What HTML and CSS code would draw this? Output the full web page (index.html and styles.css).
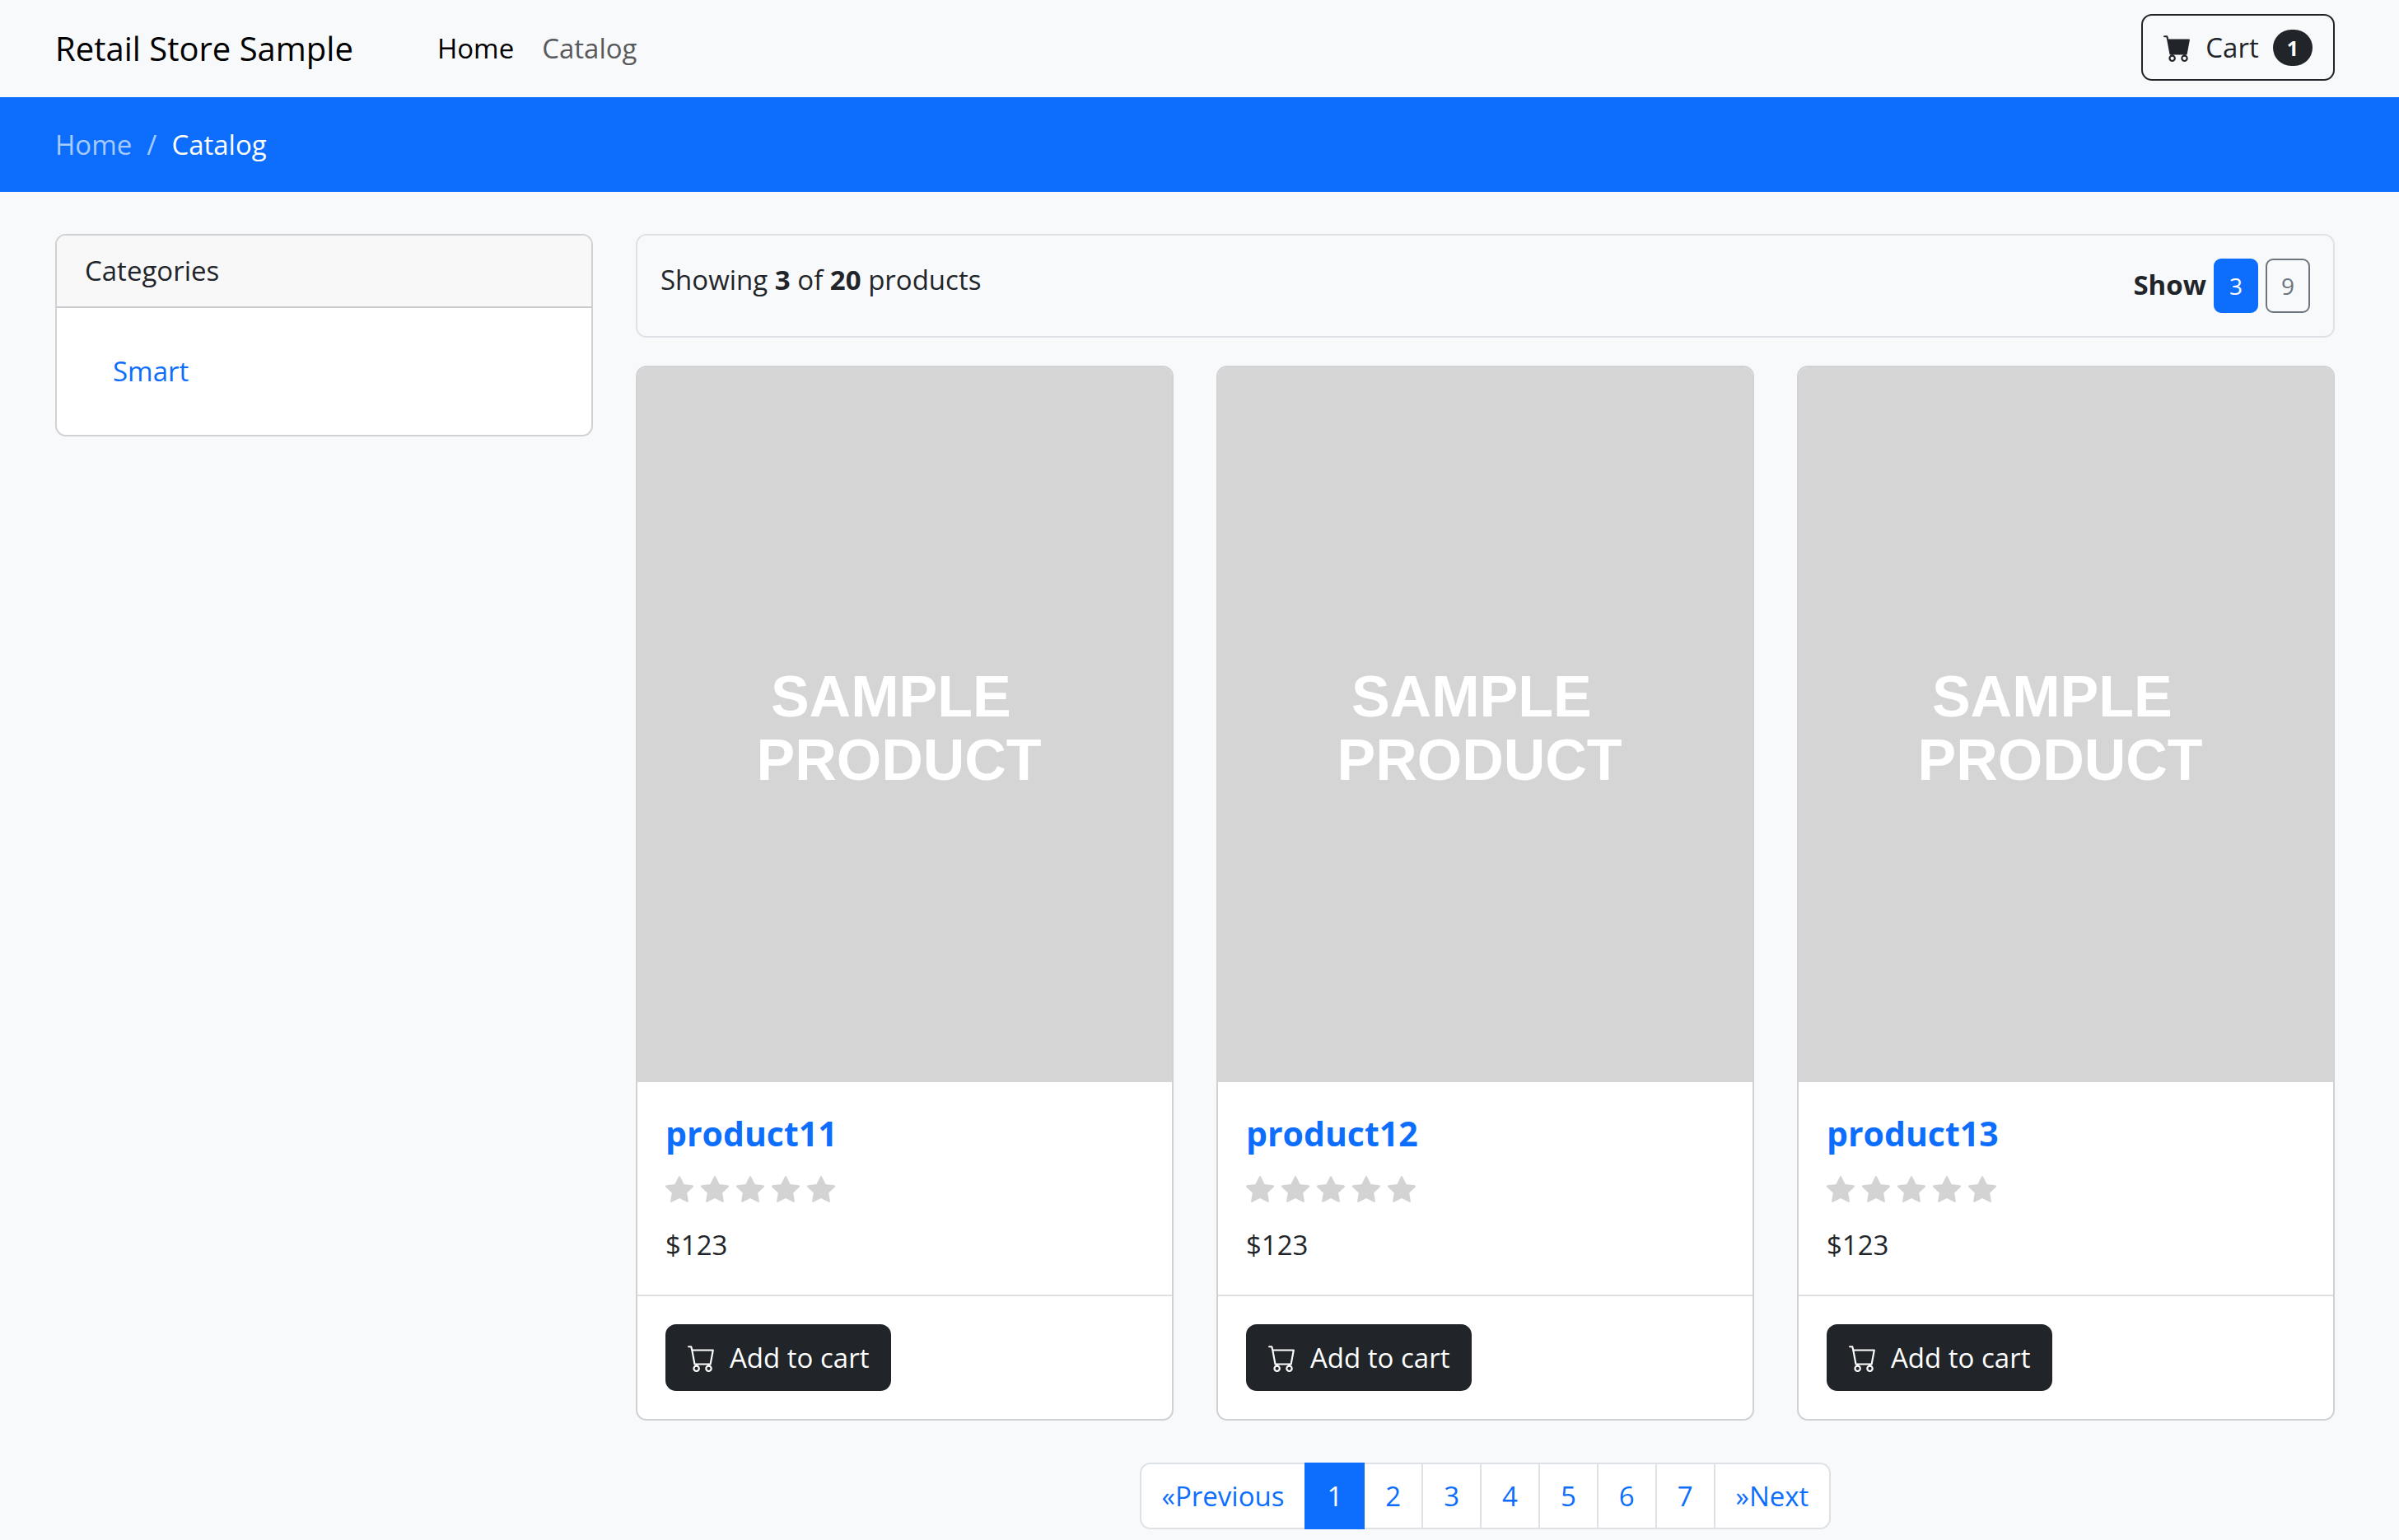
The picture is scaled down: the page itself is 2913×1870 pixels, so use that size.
FILE: index.html
```html
<!DOCTYPE html>
<html lang="en">
<head>
<meta charset="utf-8">
<title>Retail Store Sample</title>
<link rel="stylesheet" href="styles.css">
</head>
<body>
<svg class="sprite" aria-hidden="true">
  <symbol id="cart-fill" viewBox="0 0 16 16"><path d="M0 1.5A.5.5 0 0 1 .5 1H2a.5.5 0 0 1 .485.379L2.89 3H14.5a.5.5 0 0 1 .491.592l-1.5 8A.5.5 0 0 1 13 12H4a.5.5 0 0 1-.491-.408L2.01 3.607 1.61 2H.5a.5.5 0 0 1-.5-.5zM5 12a2 2 0 1 0 0 4 2 2 0 0 0 0-4zm7 0a2 2 0 1 0 0 4 2 2 0 0 0 0-4zm-7 1a1 1 0 1 1 0 2 1 1 0 0 1 0-2zm7 0a1 1 0 1 1 0 2 1 1 0 0 1 0-2z"/></symbol>
  <symbol id="cart" viewBox="0 0 16 16"><path d="M0 1.5A.5.5 0 0 1 .5 1H2a.5.5 0 0 1 .485.379L2.89 3H14.5a.5.5 0 0 1 .491.592l-1.5 8A.5.5 0 0 1 13 12H4a.5.5 0 0 1-.491-.408L2.01 3.607 1.61 2H.5a.5.5 0 0 1-.5-.5zM3.102 4l1.313 7h8.17l1.313-7H3.102zM5 12a2 2 0 1 0 0 4 2 2 0 0 0 0-4zm7 0a2 2 0 1 0 0 4 2 2 0 0 0 0-4zm-7 1a1 1 0 1 1 0 2 1 1 0 0 1 0-2zm7 0a1 1 0 1 1 0 2 1 1 0 0 1 0-2z"/></symbol>
  <symbol id="star" viewBox="0 0 16 16"><path d="M3.612 15.443c-.386.198-.824-.149-.746-.592l.83-4.73L.173 6.765c-.329-.314-.158-.888.283-.95l4.898-.696L7.538.792c.197-.39.73-.39.927 0l2.184 4.327 4.898.696c.441.062.612.636.282.95l-3.522 3.356.83 4.73c.078.443-.36.79-.746.592L8 13.187l-4.389 2.256z"/></symbol>
</svg>

<header class="navbar">
  <a class="brand" href="#">Retail Store Sample</a>
  <nav class="nav">
    <a class="nav-link active" href="#">Home</a>
    <a class="nav-link" href="#">Catalog</a>
  </nav>
  <button class="btn btn-cart" type="button">
    <svg class="icon" aria-hidden="true"><use href="#cart-fill"/></svg>
    <span>Cart</span>
    <span class="badge">1</span>
  </button>
</header>

<nav class="breadcrumb" aria-label="Breadcrumb">
  <a class="crumb" href="#">Home</a>
  <span class="crumb-sep">/</span>
  <a class="crumb current" href="#">Catalog</a>
</nav>

<main class="content">
  <aside class="card categories">
    <h2 class="card-header">Categories</h2>
    <ul class="category-list">
      <li><a class="category-link" href="#">Smart</a></li>
    </ul>
  </aside>

  <section class="catalog">
    <div class="toolbar">
      <p class="summary">Showing <strong>3</strong> of <strong>20</strong> products</p>
      <div class="page-size">
        <strong>Show</strong>
        <button class="size selected" type="button">3</button>
        <button class="size" type="button">9</button>
      </div>
    </div>

    <div class="products">
      <article class="card product">
        <div class="thumb"><span class="thumb-line">SAMPLE </span><span class="thumb-line">PRODUCT</span></div>
        <div class="product-body">
          <h3 class="product-title"><a href="#">product11</a></h3>
          <div class="stars" role="img" aria-label="No rating">
            <svg class="icon"><use href="#star"/></svg><svg class="icon"><use href="#star"/></svg><svg class="icon"><use href="#star"/></svg><svg class="icon"><use href="#star"/></svg><svg class="icon"><use href="#star"/></svg>
          </div>
          <p class="price">$123</p>
        </div>
        <div class="product-footer">
          <button class="btn btn-dark" type="button"><svg class="icon" aria-hidden="true"><use href="#cart"/></svg><span>Add to cart</span></button>
        </div>
      </article>

      <article class="card product">
        <div class="thumb"><span class="thumb-line">SAMPLE </span><span class="thumb-line">PRODUCT</span></div>
        <div class="product-body">
          <h3 class="product-title"><a href="#">product12</a></h3>
          <div class="stars" role="img" aria-label="No rating">
            <svg class="icon"><use href="#star"/></svg><svg class="icon"><use href="#star"/></svg><svg class="icon"><use href="#star"/></svg><svg class="icon"><use href="#star"/></svg><svg class="icon"><use href="#star"/></svg>
          </div>
          <p class="price">$123</p>
        </div>
        <div class="product-footer">
          <button class="btn btn-dark" type="button"><svg class="icon" aria-hidden="true"><use href="#cart"/></svg><span>Add to cart</span></button>
        </div>
      </article>

      <article class="card product">
        <div class="thumb"><span class="thumb-line">SAMPLE </span><span class="thumb-line">PRODUCT</span></div>
        <div class="product-body">
          <h3 class="product-title"><a href="#">product13</a></h3>
          <div class="stars" role="img" aria-label="No rating">
            <svg class="icon"><use href="#star"/></svg><svg class="icon"><use href="#star"/></svg><svg class="icon"><use href="#star"/></svg><svg class="icon"><use href="#star"/></svg><svg class="icon"><use href="#star"/></svg>
          </div>
          <p class="price">$123</p>
        </div>
        <div class="product-footer">
          <button class="btn btn-dark" type="button"><svg class="icon" aria-hidden="true"><use href="#cart"/></svg><span>Add to cart</span></button>
        </div>
      </article>
    </div>

    <nav class="pagination" aria-label="Pages">
      <a class="page" href="#">«Previous</a>
      <a class="page current" href="#" aria-current="page">1</a>
      <a class="page" href="#">2</a>
      <a class="page" href="#">3</a>
      <a class="page" href="#">4</a>
      <a class="page" href="#">5</a>
      <a class="page" href="#">6</a>
      <a class="page" href="#">7</a>
      <a class="page" href="#">»Next</a>
    </nav>
  </section>
</main>
</body>
</html>
```
FILE: styles.css
```css
* {
  box-sizing: border-box;
}

body {
  margin: 0;
  background: #f8f9fb;
  color: #212529;
  font-family: "Segoe UI", "Open Sans", "Noto Sans", sans-serif;
  font-size: 33px;
  line-height: 52px;
}

h2, h3, p, ul {
  margin: 0;
  padding: 0;
  font-size: inherit;
  font-weight: 400;
  list-style: none;
}

a {
  color: #0d6efd;
  text-decoration: none;
}

button {
  font: inherit;
  cursor: pointer;
}

strong {
  font-weight: 700;
}

.sprite {
  display: none;
}

.icon {
  width: 34px;
  height: 34px;
  fill: currentColor;
  flex: none;
}

/* Top bar */
.navbar {
  display: flex;
  align-items: center;
  padding: 17px 78px 20px 67px;
}

.brand {
  padding-top: 2px;
  color: #000;
  font-size: 40px;
}

.nav {
  display: flex;
  gap: 34px;
  margin-left: 102px;
  padding-top: 2px;
}

.nav-link {
  color: #595a5b;
}

.nav-link.active {
  color: #000;
}

.btn {
  display: flex;
  align-items: center;
  gap: 17px;
  padding: 13px 25px;
  border: 2px solid #212529;
  border-radius: 13px;
  line-height: 51px;
}

.btn-cart {
  margin-left: auto;
  background: transparent;
  color: #212529;
}

.btn-dark {
  background: #212529;
  color: #fff;
}

.badge {
  padding: 0 17px;
  border-radius: 22px;
  background: #212529;
  color: #fff;
  font-size: 25px;
  font-weight: 700;
  line-height: 44px;
}

/* Breadcrumb band */
.breadcrumb {
  display: flex;
  gap: 18px;
  padding: 32px 67px 31px;
  background: #0d6efd;
}

.crumb,
.crumb-sep {
  color: #a6cbff;
}

.crumb.current {
  color: #fff;
}

/* Content */
.content {
  display: grid;
  grid-template-columns: repeat(4, minmax(0, 1fr));
  align-items: start;
  gap: 52px;
  padding: 51px 78px 15px 67px;
}

.card {
  overflow: hidden;
  border: 2px solid #cfd1d4;
  border-radius: 13px;
  background: #fff;
}

.card-header {
  padding: 17px 34px;
  border-bottom: 2px solid #cacbcc;
  background: #f8f8f8;
}

.category-list {
  padding: 34px;
}

.category-link {
  display: block;
  padding: 17px 34px;
}

.catalog {
  grid-column: span 3;
}

.toolbar {
  display: flex;
  justify-content: space-between;
  align-items: flex-start;
  padding: 28px;
  border: 2px solid #dee2e6;
  border-radius: 13px;
}

.page-size {
  display: flex;
  align-items: baseline;
  gap: 9px;
}

.size {
  padding: 9px 17px;
  border: 2px solid #6c757d;
  border-radius: 9px;
  background: transparent;
  color: #6c757d;
  font-size: 28px;
  line-height: 44px;
}

.size.selected {
  border-color: #0d6efd;
  background: #0d6efd;
  color: #fff;
}

.products {
  display: grid;
  grid-template-columns: repeat(3, minmax(0, 1fr));
  gap: 52px;
  margin-top: 34px;
}

.product {
  display: flex;
  flex-direction: column;
}

.thumb {
  display: flex;
  flex-direction: column;
  align-items: center;
  justify-content: center;
  aspect-ratio: 649 / 868;
  padding: 10px 14px 0 0;
  background: #d5d5d5;
  color: #fff;
  font-family: Arial, "Liberation Sans", sans-serif;
  font-size: 70px;
  font-weight: 700;
  line-height: 77px;
}

.thumb-line {
  white-space: pre;
}

.product-body {
  padding: 34px;
}

.product-title {
  font-size: 41px;
  font-weight: 700;
  line-height: 56px;
}

.stars {
  display: flex;
  align-items: center;
  gap: 9px;
  height: 51px;
  margin: 14px 0 17px;
  color: #d3d3d3;
}

.product-footer {
  padding: 34px;
  border-top: 2px solid #dfdfdf;
}

.pagination {
  display: flex;
  justify-content: center;
  margin-top: 51px;
}

.page {
  padding: 13px 25px;
  border: 2px solid #dee2e6;
  background: #fff;
  line-height: 51px;
}

.page + .page {
  margin-left: -2px;
}

.page:first-child {
  border-radius: 13px 0 0 13px;
}

.page:last-child {
  border-radius: 0 13px 13px 0;
}

.page.current {
  z-index: 1;
  border-color: #0d6efd;
  background: #0d6efd;
  color: #fff;
}
```
